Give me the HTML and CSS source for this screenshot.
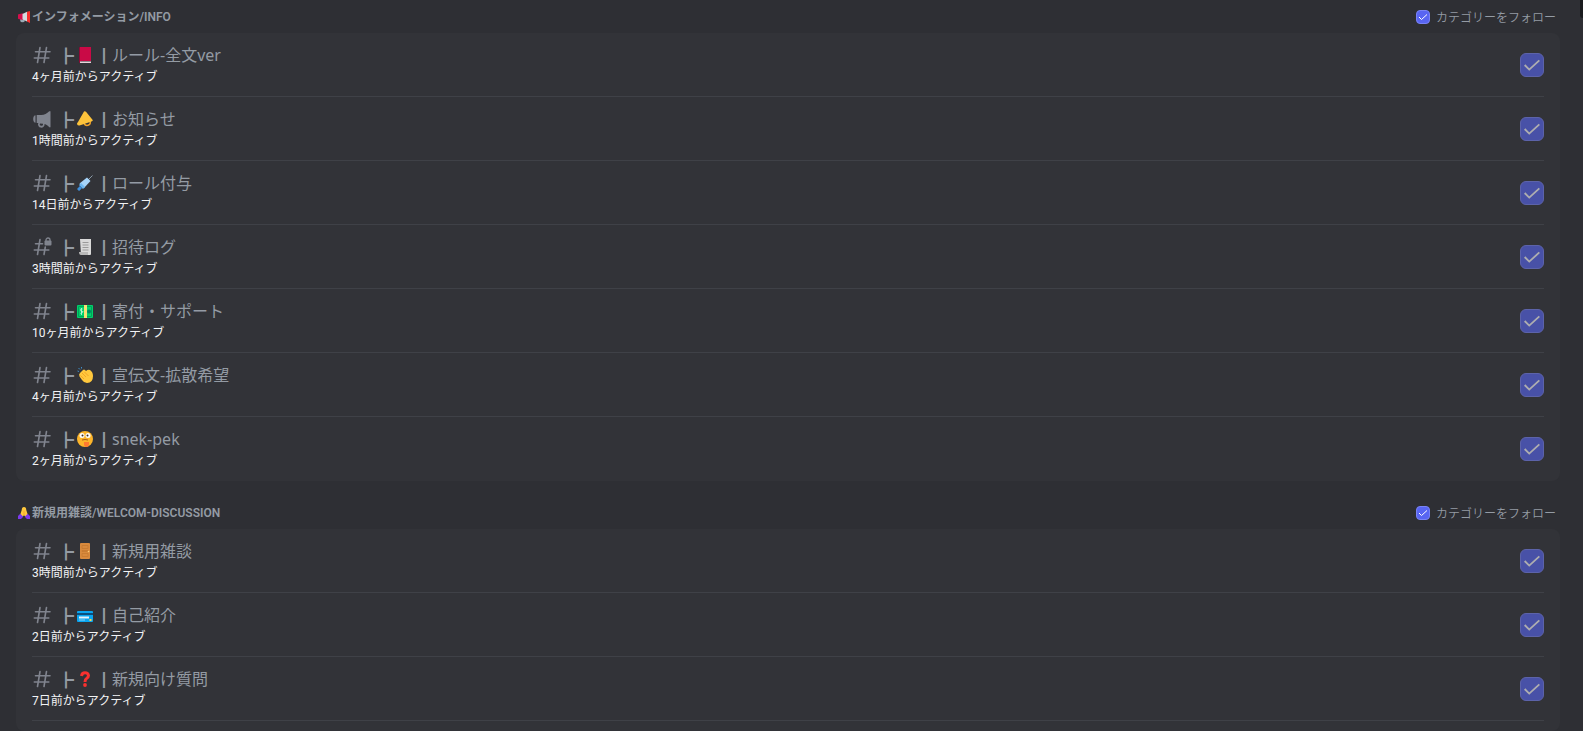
FILE: index.html
```html
<!DOCTYPE html>
<html lang="ja">
<head>
    <meta charset="UTF-8">
    <meta name="viewport" content="width=device-width, initial-scale=1.0">
    <title>チャンネル一覧</title>
    <link rel="stylesheet" href="styles.css">
</head>
<body>
    <svg class="sprite" aria-hidden="true">
        <symbol id="hash" viewBox="0 0 20 20">
            <path d="M8 2.500L5.500 17.500M14.500 2.500L12 17.500M3.500 6.800H18M2.300 13H16.800" fill="none" stroke="currentColor" stroke-width="1.600" stroke-linecap="round"/>
        </symbol>
        <symbol id="hash-lock" viewBox="0 0 20 20">
            <path d="M8 2.500L5.500 17.500M13.300 10L12 17.500M3.500 6.800H10.500M2.300 13H16.800" fill="none" stroke="currentColor" stroke-width="1.600" stroke-linecap="round"/>
            <path d="M14 4.500V3a2 2 0 0 1 4 0v1.500" fill="none" stroke="currentColor" stroke-width="1.300"/>
            <rect x="12.500" y="3.600" width="7" height="5" rx="1" fill="currentColor"/>
        </symbol>
        <symbol id="megaphone" viewBox="0 0 20 20">
            <path d="M18.500 2.300v15.900h-1.300c-1.300-1.700-2.800-2.700-4.600-3.200a3.300 3.300 0 1 1-6.300-1H4.700V6h4.500c3.300 0 5.700-1.300 8-3.700zM8 14.400a1.600 1.600 0 1 0 3 .3z" fill="currentColor" fill-rule="evenodd"/>
            <path d="M3.500 6.200v7.500c-1.300 0-2.300-1.400-2.300-3.700s1-3.800 2.300-3.800z" fill="currentColor"/>
        </symbol>
    </svg>
    <main class="channels">
        <section class="category">
            <header class="category-header">
                <h2 class="category-title">
                    <svg class="emoji-small" viewBox="0 0 16 16" aria-hidden="true">
                        <path d="M3 10h6v3q0 2-3 2t-3-2z" fill="#99aab5"/>
                        <path d="M0 5q0-1 2-1l5-1v9l-5-1q-2 0-2-1z" fill="#d40f4c"/>
                        <path d="M6 4l6-3v13l-6-3z" fill="#d5dbe0"/>
                        <path d="M12 1l4-1v16l-4-2z" fill="#f8312f"/>
                    </svg>インフォメーション/INFO
                </h2>
                <label class="follow"><input class="check-small" type="checkbox" checked>カテゴリーをフォロー</label>
            </header>
            <ul class="card">
                <li class="row">
                    <div class="info">
                        <label class="name" for="c1"><svg class="icon"><use href="#hash"/></svg><span class="mark">┣</span><svg class="emoji" viewBox="0 0 16 16"><path d="M3 0h11v14H4l-1 1z" fill="#c90a46"/><path d="M3 14.500h11V16H3z" fill="#e6d5dc"/><path d="M2 1q0-1 1-1v16q-1 0-1-1z" fill="#8f0935"/></svg><span class="mark">┃</span>ルール-全文ver</label>
                        <p class="active">4ヶ月前からアクティブ</p>
                    </div>
                    <input class="check" id="c1" type="checkbox" checked disabled>
                </li>
                <li class="row">
                    <div class="info">
                        <label class="name" for="c2"><svg class="icon"><use href="#megaphone"/></svg><span class="mark">┣</span><svg class="emoji" viewBox="0 0 16 16"><path d="M7 12q1 3 4 2.300t2-4" fill="none" stroke="#f4a52a" stroke-width="1.500"/><path d="M7 .5q1-.8 2 .3l6.500 8q.8 1.500-1 1.700L2.500 14.500Q0 15 0 12.500 0 12 1 11z" fill="#fdc33b"/></svg><span class="mark">┃</span>お知らせ</label>
                        <p class="active">1時間前からアクティブ</p>
                    </div>
                    <input class="check" id="c2" type="checkbox" checked disabled>
                </li>
                <li class="row">
                    <div class="info">
                        <label class="name" for="c3"><svg class="icon"><use href="#hash"/></svg><span class="mark">┣</span><svg class="emoji" viewBox="0 0 16 16"><path d="M11 5l4.500-4.500" stroke="#8899a6" stroke-width="1"/><path d="M10 2.500l3.500 3.500-6.500 7-4.500-4.500z" fill="#a6d4fa"/><path d="M4 8l4 4-2 2L2 10z" fill="#6db8f2"/><path d="M4 12L1 15" stroke="#3f8fdc" stroke-width="3"/></svg><span class="mark">┃</span>ロール付与</label>
                        <p class="active">14日前からアクティブ</p>
                    </div>
                    <input class="check" id="c3" type="checkbox" checked disabled>
                </li>
                <li class="row">
                    <div class="info">
                        <label class="name" for="c4"><svg class="icon"><use href="#hash-lock"/></svg><span class="mark">┣</span><svg class="emoji" viewBox="0 0 16 16"><path d="M3 0h11v15q0 1-1 1H4z" fill="#d9d9d9"/><path d="M2 13h9v3H4q-2 0-2-3z" fill="#b8b8b8"/><path d="M5.500 3.500h6M5.500 6h6M5.500 8.500h6M5.500 11h6" stroke="#9a9a9a"/></svg><span class="mark">┃</span>招待ログ</label>
                        <p class="active">3時間前からアクティブ</p>
                    </div>
                    <input class="check" id="c4" type="checkbox" checked disabled>
                </li>
                <li class="row">
                    <div class="info">
                        <label class="name" for="c5"><svg class="icon"><use href="#hash"/></svg><span class="mark">┣</span><svg class="emoji" viewBox="0 0 16 16"><rect y="2" width="16" height="13" rx="1" fill="#00d26a"/><path d="M1.500 3.500h13v10h-13z" fill="none" stroke="#00a35a"/><circle cx="12" cy="8.500" r="2" fill="#008463"/><path d="M7 2h3v13H7z" fill="#f9e076"/><path d="M5.500 6q-2-1-2 .800t2 1.700-2 2M4.500 5v7" fill="none" stroke="#c4f5dd" stroke-width=".8"/></svg><span class="mark">┃</span>寄付・サポート</label>
                        <p class="active">10ヶ月前からアクティブ</p>
                    </div>
                    <input class="check" id="c5" type="checkbox" checked disabled>
                </li>
                <li class="row">
                    <div class="info">
                        <label class="name" for="c6"><svg class="icon"><use href="#hash"/></svg><span class="mark">┣</span><svg class="emoji" viewBox="0 0 16 16"><path d="M3 6l3-3q1-1 2 0l1 1q2-2 4-1 3 2 3 6 0 7-6 7-3 0-5-3l-2.500-3.500Q1.500 7 3 6z" fill="#ffc83d"/><path d="M5 6l4 4M7.500 5l4 4M3.500 8.500L7 12" stroke="#f09a20" stroke-width=".8" fill="none"/><path d="M.5 4l1.500.5M1.500 1l1.500 1.500M4.500 0v1.500" stroke="#3f8fc9" fill="none"/></svg><span class="mark">┃</span>宣伝文-拡散希望</label>
                        <p class="active">4ヶ月前からアクティブ</p>
                    </div>
                    <input class="check" id="c6" type="checkbox" checked disabled>
                </li>
                <li class="row">
                    <div class="info">
                        <label class="name" for="c7"><svg class="icon"><use href="#hash"/></svg><span class="mark">┣</span><svg class="emoji" viewBox="0 0 16 16"><circle cx="8" cy="8" r="8" fill="#fdb52a"/><circle cx="5" cy="4.500" r="2.500" fill="#fff"/><circle cx="11" cy="4.500" r="2.500" fill="#fff"/><circle cx="5.500" cy="4.500" r="1" fill="#3b2a20"/><circle cx="10.500" cy="4.500" r="1" fill="#3b2a20"/><path d="M5 9q3-1 6 0" fill="none" stroke="#a85c1a"/><path d="M7 11h5v2q0 3-2.500 3T7 13z" fill="#ff7a2f"/></svg><span class="mark">┃</span>snek-pek</label>
                        <p class="active">2ヶ月前からアクティブ</p>
                    </div>
                    <input class="check" id="c7" type="checkbox" checked disabled>
                </li>
            </ul>
        </section>
        <section class="category">
            <header class="category-header">
                <h2 class="category-title">
                    <svg class="emoji-small" viewBox="0 0 16 16" aria-hidden="true">
                        <path d="M8 0q3 0 3 4l2 6-3 3-2-2-2 2-3-3 2-6q0-4 3-4z" fill="#ffc83d"/>
                        <path d="M8 5v6" stroke="#f0a020"/>
                        <path d="M3 9l4 4-3 3H0v-4zM13 9l-4 4 3 3h4v-4z" fill="#7c3aed"/>
                    </svg>新規用雑談/WELCOM-DISCUSSION
                </h2>
                <label class="follow"><input class="check-small" type="checkbox" checked>カテゴリーをフォロー</label>
            </header>
            <ul class="card">
                <li class="row">
                    <div class="info">
                        <label class="name" for="c8"><svg class="icon"><use href="#hash"/></svg><span class="mark">┣</span><svg class="emoji" viewBox="0 0 16 16"><rect x="3" width="10" height="16" rx="1" fill="#d98a3d"/><path d="M5 2.500h6v3H5zM5 7.500h6v1H5zM5 10.500h6v3H5z" fill="none" stroke="#c67a30" stroke-width=".8"/><circle cx="11.500" cy="8.500" r=".8" fill="#ffd27a"/></svg><span class="mark">┃</span>新規用雑談</label>
                        <p class="active">3時間前からアクティブ</p>
                    </div>
                    <input class="check" id="c8" type="checkbox" checked disabled>
                </li>
                <li class="row">
                    <div class="info">
                        <label class="name" for="c9"><svg class="icon"><use href="#hash"/></svg><span class="mark">┣</span><svg class="emoji" viewBox="0 0 16 16"><rect y="4" width="16" height="11" rx="1" fill="#0aa5f0"/><path d="M0 6h16v2H0z" fill="#0b4f7d"/><path d="M2 9.500h10v2H2z" fill="#e8f3fa"/><path d="M2 13h6" stroke="#8cd3f7"/><rect x="12.500" y="12" width="2" height="2" fill="#ffd94a"/></svg><span class="mark">┃</span>自己紹介</label>
                        <p class="active">2日前からアクティブ</p>
                    </div>
                    <input class="check" id="c9" type="checkbox" checked disabled>
                </li>
                <li class="row">
                    <div class="info">
                        <label class="name" for="c10"><svg class="icon"><use href="#hash"/></svg><span class="mark">┣</span><svg class="emoji" viewBox="0 0 16 16"><path d="M4.500 5Q5 1.800 8 1.800t3.500 2.700Q11.500 6.200 9.800 7.200 8 8.200 8 11" fill="none" stroke="#f8312f" stroke-width="3"/><circle cx="8" cy="14" r="1.900" fill="#f8312f"/></svg><span class="mark">┃</span>新規向け質問</label>
                        <p class="active">7日前からアクティブ</p>
                    </div>
                    <input class="check" id="c10" type="checkbox" checked disabled>
                </li>
            </ul>
        </section>
    </main>
    <div class="scroll-thumb"></div>
</body>
</html>
```
FILE: styles.css
```css
* {
    box-sizing: border-box;
}
body {
    margin: 0;
    font-family: Roboto, "Noto Sans CJK JP", sans-serif;
    background-color: #2e2f34;
    color: #949ba4;
}
.sprite {
    display: none;
}
.channels {
    display: flex;
    flex-direction: column;
    gap: 16px;
    height: 100vh;
    overflow: hidden;
    padding: 1px 23px 0 16px;
}
.category {
    display: flex;
    flex-direction: column;
    flex-shrink: 0;
}
.category:last-child {
    flex-grow: 1;
}
.category-header {
    display: flex;
    justify-content: space-between;
    align-items: center;
    height: 32px;
    padding: 0 4px 0 2px;
}
.category-title {
    display: flex;
    align-items: center;
    gap: 2px;
    margin: 0;
    font-size: 12px;
    font-weight: 600;
    line-height: 16px;
}
.emoji-small {
    width: 12px;
    height: 12px;
}
.follow {
    display: flex;
    align-items: center;
    gap: 6px;
    font-family: "Noto Sans CJK JP", sans-serif;
    font-size: 12px;
    font-weight: 350;
    line-height: 16px;
}
.card {
    flex-grow: 1;
    margin: 0;
    padding: 0 16px;
    list-style: none;
    background-color: #323338;
    border-radius: 8px;
}
.row {
    display: flex;
    justify-content: space-between;
    align-items: center;
    height: 64px;
    border-bottom: 1px solid #3f4147;
}
.category:first-child .row:last-child {
    border-bottom-color: transparent;
}
.info {
    padding-top: 2px;
}
.name {
    display: flex;
    align-items: center;
    font-family: "Noto Sans", "Noto Sans CJK JP", sans-serif;
    font-size: 16px;
    font-weight: 400;
    line-height: 22px;
}
.icon {
    width: 20px;
    height: 20px;
    margin-right: 6px;
    color: #80848e;
}
.mark {
    width: 16px;
    font-family: "Noto Sans CJK JP", sans-serif;
}
.emoji {
    width: 16px;
    height: 16px;
    margin: 0 3px;
}
.active {
    margin: 0;
    font-size: 12px;
    line-height: 22px;
    color: #f2f3f5;
}
.check,
.check-small {
    appearance: none;
    flex-shrink: 0;
    margin: 0;
    border: 1px solid #7983f5;
    background: #5865f2 url("data:image/svg+xml,%3Csvg xmlns='http://www.w3.org/2000/svg' viewBox='0 0 24 24'%3E%3Cpath d='M4 12l5 5L20 7' fill='none' stroke='white' stroke-width='2'/%3E%3C/svg%3E") center / 100% no-repeat;
}
.check {
    width: 24px;
    height: 24px;
    border-radius: 6px;
    opacity: 0.6;
}
.check-small {
    width: 14px;
    height: 14px;
    border-radius: 4px;
}
.scroll-thumb {
    position: fixed;
    top: 0;
    right: 0;
    width: 3px;
    height: 18px;
    background-color: #1a1b1e;
    border-radius: 0 0 0 3px;
}
```
